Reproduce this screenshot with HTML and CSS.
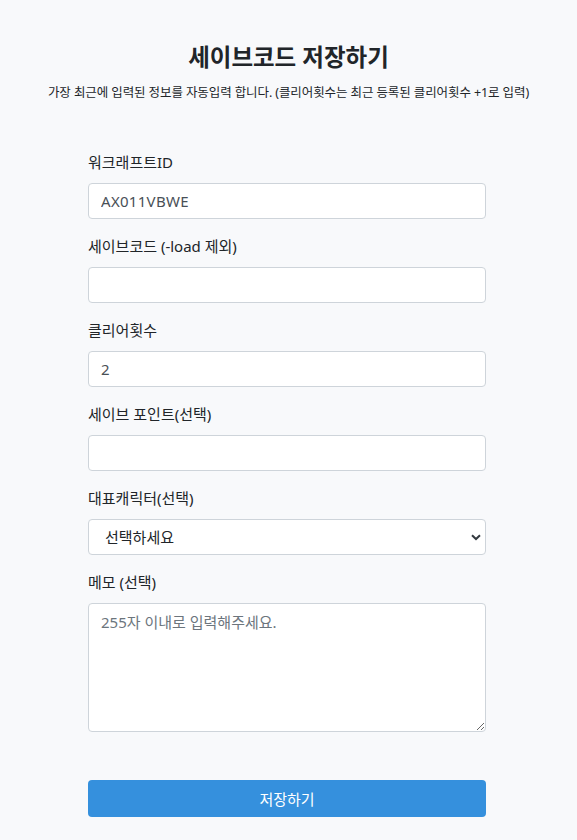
FILE: index.html
```html
<!DOCTYPE html>
<html lang="ko">
<head>
<meta charset="utf-8">
<link rel="stylesheet" href="styles.css">
</head>
<body>
<div class="page">
  <h1 class="title">세이브코드 저장하기</h1>
  <p class="subtitle">가장 최근에 입력된 정보를 자동입력 합니다. (클리어횟수는 최근 등록된 클리어횟수 +1로 입력)</p>
  <form class="form">
    <div class="field">
      <label class="label">워크래프트ID</label>
      <input class="control" type="text" value="AX011VBWE">
    </div>
    <div class="field">
      <label class="label">세이브코드 (-load 제외)</label>
      <input class="control" type="text">
    </div>
    <div class="field">
      <label class="label">클리어횟수</label>
      <input class="control" type="text" value="2">
    </div>
    <div class="field">
      <label class="label">세이브 포인트(선택)</label>
      <input class="control" type="text">
    </div>
    <div class="field">
      <label class="label">대표캐릭터(선택)</label>
      <div class="select-wrap">
        <select class="control select">
          <option>선택하세요</option>
        </select>
        <svg class="chev" width="10" height="7" viewBox="0 0 10 7"><path d="M1 1.2 L5 5 L9 1.2" fill="none" stroke="#343a40" stroke-width="2"/></svg>
      </div>
    </div>
    <div class="field">
      <label class="label">메모 (선택)</label>
      <textarea class="control area" placeholder="255자 이내로 입력해주세요."></textarea>
    </div>
    <button class="btn" type="button">저장하기</button>
  </form>
</div>
</body>
</html>
```
FILE: styles.css
```css
html, body {
  margin: 0;
  padding: 0;
  background: #f8f9fb;
}
body {
  font-family: "Noto Sans", "Noto Sans CJK KR", sans-serif;
  color: #212529;
}
.page {
  width: 577px;
  height: 840px;
  overflow: hidden;
}
.title {
  margin: 0;
  padding-top: 42px;
  text-align: center;
  font-size: 23.5px;
  line-height: 30px;
  font-weight: 700;
  color: #212529;
}
.subtitle {
  margin: 12px 0 0;
  text-align: center;
  font-size: 12.5px;
  line-height: 18px;
  color: #212529;
  letter-spacing: -0.1px;
}
.form {
  width: 398px;
  margin: 49px 0 0 88px;
}
.field {
  display: flex;
  flex-direction: column;
  margin-bottom: 16px;
}
.label {
  font-size: 15px;
  line-height: 22px;
  margin-bottom: 10px;
  color: #212529;
}
.control {
  box-sizing: border-box;
  width: 398px;
  height: 36px;
  margin: 0;
  border: 1px solid #ced4da;
  border-radius: 4px;
  background: #fff;
  padding: 0 12px;
  font-family: "Noto Sans", "Noto Sans CJK KR", sans-serif;
  font-size: 15px;
  letter-spacing: 0.3px;
  color: #495057;
  outline: none;
}
.select-wrap {
  position: relative;
}
.select {
  appearance: none;
  -webkit-appearance: none;
  padding-left: 16px;
  color: #212529;
  letter-spacing: 0;
}
.chev {
  position: absolute;
  right: 5px;
  top: 15px;
}
.area {
  height: 129px;
  padding-top: 7px;
  resize: vertical;
  line-height: 22px;
  letter-spacing: 0;
}
.area::placeholder {
  color: #6c757d;
}
.btn {
  display: block;
  width: 398px;
  height: 37px;
  margin-top: 48px;
  border: none;
  border-radius: 4px;
  background: #3590dd;
  color: #fff;
  font-family: "Noto Sans", "Noto Sans CJK KR", sans-serif;
  font-size: 15px;
}
```
